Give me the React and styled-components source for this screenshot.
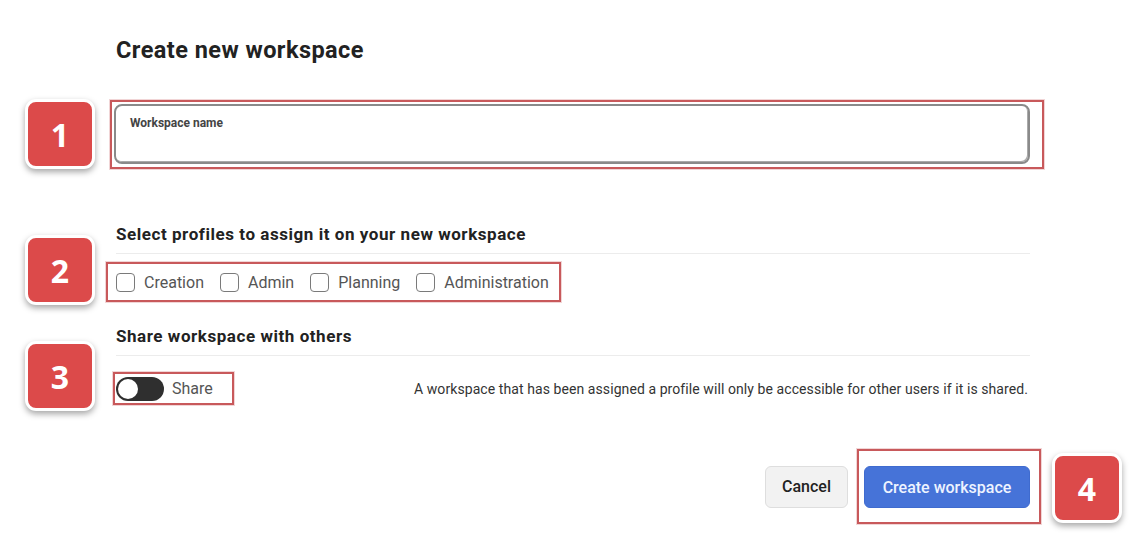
import styled, { createGlobalStyle } from 'styled-components';

const GlobalStyle = createGlobalStyle`
  body {
    margin: 0;
    background: #fff;
    font-family: Roboto, 'Liberation Sans', Arial, sans-serif;
    color: #222;
  }
`;

const Page = styled.div`
  position: relative;
  width: 1148px;
  height: 542px;
  box-sizing: border-box;
  padding: 36px 0 0 116px;
  overflow: hidden;
`;

const Content = styled.div`
  width: 914px;
  display: flex;
  flex-direction: column;
`;

const Title = styled.h1`
  margin: 0 0 36px;
  font-size: 23.5px;
  letter-spacing: 0.45px;
  line-height: 28px;
  font-weight: 700;
  color: #222;
`;

const Highlight = styled.div`
  border: 2px solid #c8595b;
  box-shadow: 0 0 0 1px rgba(200, 89, 91, 0.25);
  box-sizing: border-box;
  display: flex;
  align-items: center;
`;

const NameHighlight = styled(Highlight)`
  margin-left: -6px;
  margin-right: -14px;
  padding: 2px 12px 3px 2px;
`;

const NameField = styled.div`
  flex: 1;
  height: 60px;
  box-sizing: border-box;
  border: 2px solid #8a8a8a;
  border-radius: 8px;
  box-shadow: inset -1px -1px 0 #aaa;
  padding: 10px 14px;
`;

const FieldLabel = styled.label`
  display: block;
  font-size: 12px;
  font-weight: 700;
  color: #444;
`;

const SectionTitle = styled.h2`
  margin: ${(p) => p.$top}px 0 0;
  padding-bottom: 8px;
  border-bottom: 1px solid #ececec;
  font-size: 17px;
  letter-spacing: 0.55px;
  line-height: 21px;
  font-weight: 700;
  color: #222;
`;

const ProfilesHighlight = styled(Highlight)`
  align-self: flex-start;
  margin: 8px 0 0 -10px;
  padding: 0 10px 0 8px;
  height: 40px;
  gap: 16px;
`;

const CheckItem = styled.label`
  display: flex;
  align-items: center;
  gap: 9px;
  font-size: 16px;
  color: #555;
`;

const Box = styled.span`
  width: 19px;
  height: 19px;
  box-sizing: border-box;
  border: 1.5px solid #7a7a7a;
  border-radius: 4px;
  background: #fff;
`;

const ShareRow = styled.div`
  display: flex;
  align-items: center;
  justify-content: space-between;
  margin-top: 16px;
`;

const ShareHighlight = styled(Highlight)`
  margin-left: -3px;
  padding: 0 19px 0 1px;
  height: 33px;
  gap: 8px;
`;

const Toggle = styled.span`
  width: 48px;
  height: 24px;
  border-radius: 12px;
  background: #2f2f2f;
  display: flex;
  align-items: center;
  padding: 0 2px;
  box-sizing: border-box;
`;

const Knob = styled.span`
  width: 20px;
  height: 20px;
  border-radius: 50%;
  background: #fff;
`;

const ToggleLabel = styled.span`
  font-size: 16px;
  color: #555;
`;

const HelpText = styled.p`
  margin: 0 2px 0 0;
  font-size: 14px;
  letter-spacing: 0.08px;
  color: #333;
`;

const Footer = styled.div`
  display: flex;
  align-items: center;
  justify-content: flex-end;
  margin: 44px -11px 0 0;
  gap: 9px;
`;

const Button = styled.button`
  height: 42px;
  border-radius: 6px;
  font-family: inherit;
  font-size: 16px;
  font-weight: 500;
  padding: 0 12px;
  cursor: pointer;
  border: 1px solid ${(p) => (p.$primary ? '#3f6bcf' : '#dedede')};
  background: ${(p) => (p.$primary ? '#4673d8' : '#f2f2f2')};
  color: ${(p) => (p.$primary ? '#eef3ff' : '#222')};
  width: ${(p) => p.$width}px;
`;

const ButtonHighlight = styled(Highlight)`
  padding: 15px 9px 14px 5px;
`;

const Badge = styled.div`
  position: absolute;
  left: ${(p) => p.$left}px;
  top: ${(p) => p.$top}px;
  width: 64px;
  height: 64px;
  border: 3px solid #fff;
  border-radius: 11px;
  background: #dc4a4a;
  box-shadow: 0 3px 6px rgba(0, 0, 0, 0.35);
  color: #fff;
  font-size: 32px;
  font-weight: 700;
  display: flex;
  align-items: center;
  justify-content: center;
  font-family: 'Open Sans', Roboto, sans-serif;
`;

const profiles = ['Creation', 'Admin', 'Planning', 'Administration'];

export default function App() {
  return (
    <>
      <GlobalStyle />
      <Page>
        <Content>
          <Title>Create new workspace</Title>
          <NameHighlight>
            <NameField>
              <FieldLabel>Workspace name</FieldLabel>
            </NameField>
          </NameHighlight>

          <SectionTitle $top={55}>Select profiles to assign it on your new workspace</SectionTitle>
          <ProfilesHighlight>
            {profiles.map((p) => (
              <CheckItem key={p}>
                <Box />
                {p}
              </CheckItem>
            ))}
          </ProfilesHighlight>

          <SectionTitle $top={24}>Share workspace with others</SectionTitle>
          <ShareRow>
            <ShareHighlight>
              <Toggle>
                <Knob />
              </Toggle>
              <ToggleLabel>Share</ToggleLabel>
            </ShareHighlight>
            <HelpText>
              A workspace that has been assigned a profile will only be accessible for other users if it is shared.
            </HelpText>
          </ShareRow>

          <Footer>
            <Button $width={83}>Cancel</Button>
            <ButtonHighlight>
              <Button $primary $width={166}>Create workspace</Button>
            </ButtonHighlight>
          </Footer>
        </Content>
        <Badge $left={25} $top={99}>1</Badge>
        <Badge $left={25} $top={235}>2</Badge>
        <Badge $left={25} $top={341}>3</Badge>
        <Badge $left={1052} $top={453}>4</Badge>
      </Page>
    </>
  );
}
